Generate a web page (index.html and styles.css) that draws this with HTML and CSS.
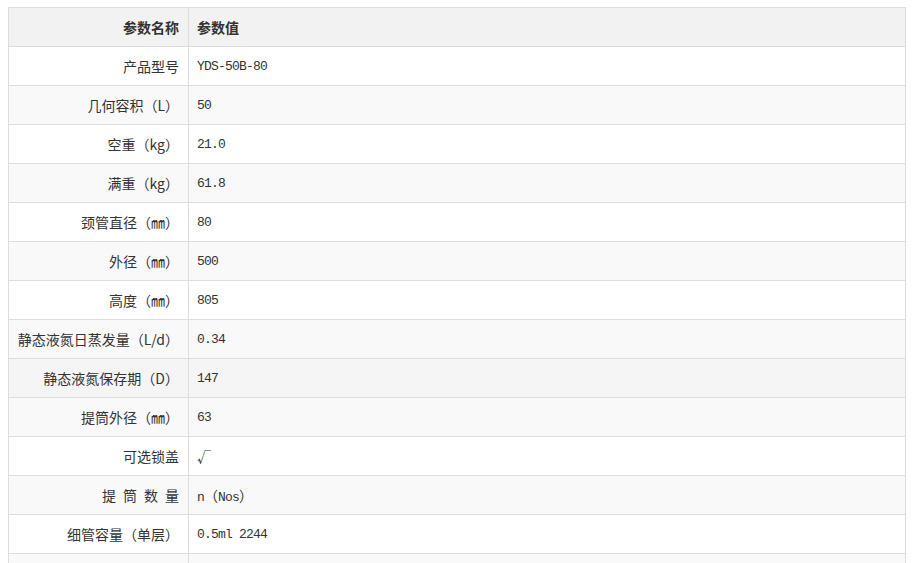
FILE: index.html
```html
<!DOCTYPE html>
<html lang="zh-CN">
<head>
<meta charset="utf-8">
<link rel="stylesheet" href="styles.css">
</head>
<body>
<table class="spec">
  <thead>
    <tr><th class="name">参数名称</th><th class="val">参数值</th></tr>
  </thead>
  <tbody>
    <tr><td class="name">产品型号</td><td class="val">YDS-50B-80</td></tr>
    <tr><td class="name">几何容积（L）</td><td class="val">50</td></tr>
    <tr><td class="name">空重（kg）</td><td class="val">21.0</td></tr>
    <tr><td class="name">满重（kg）</td><td class="val">61.8</td></tr>
    <tr><td class="name">颈管直径（㎜）</td><td class="val">80</td></tr>
    <tr><td class="name">外径（㎜）</td><td class="val">500</td></tr>
    <tr><td class="name">高度（㎜）</td><td class="val">805</td></tr>
    <tr><td class="name">静态液氮日蒸发量（L/d）</td><td class="val">0.34</td></tr>
    <tr class="hover"><td class="name">静态液氮保存期（D）</td><td class="val">147</td></tr>
    <tr><td class="name">提筒外径（㎜）</td><td class="val">63</td></tr>
    <tr><td class="name">可选锁盖</td><td class="val"><span class="cjk">√</span></td></tr>
    <tr><td class="name">提&#8194;筒&#8194;数&#8194;量</td><td class="val">n<span class="cjk">（</span>Nos<span class="cjk">）</span></td></tr>
    <tr><td class="name">细管容量（单层）</td><td class="val">0.5ml 2244</td></tr>
    <tr><td class="name">&nbsp;</td><td class="val">&nbsp;</td></tr>
  </tbody>
</table>
</body>
</html>
```
FILE: styles.css
```css
html, body {
  margin: 0;
  padding: 0;
  background: #fff;
}
body {
  padding: 7px 11px 0 8px;
  font-family: "Noto Sans CJK SC", "DejaVu Sans", sans-serif;
  font-size: 14px;
  color: #333;
}
.spec {
  width: 898px;
  border-collapse: collapse;
  table-layout: fixed;
}
.spec th, .spec td {
  height: 38px;
  padding: 0 9px 0 8px;
  border: 1px solid #dddddd;
  vertical-align: middle;
  white-space: nowrap;
  line-height: 18px;
}
.spec .name {
  width: 162px;
  text-align: right;
}
.spec td.val {
  text-align: left;
  font-family: "Liberation Mono", "Noto Sans CJK SC", monospace;
  font-size: 13px;
  letter-spacing: -0.8px;
  height: 36px;
  padding-top: 2px;
}
.spec th.val {
  text-align: left;
}
.spec .cjk {
  font-family: "Noto Sans CJK SC", sans-serif;
  font-size: 14px;
  letter-spacing: 0;
}
.spec thead th {
  background: #f2f2f2;
  font-weight: bold;
  font-size: 14px;
  color: #333;
}
.spec tbody tr:nth-child(even) td {
  background: #f9f9f9;
}
.spec tbody tr.hover td {
  background: #f5f5f5;
}
```
